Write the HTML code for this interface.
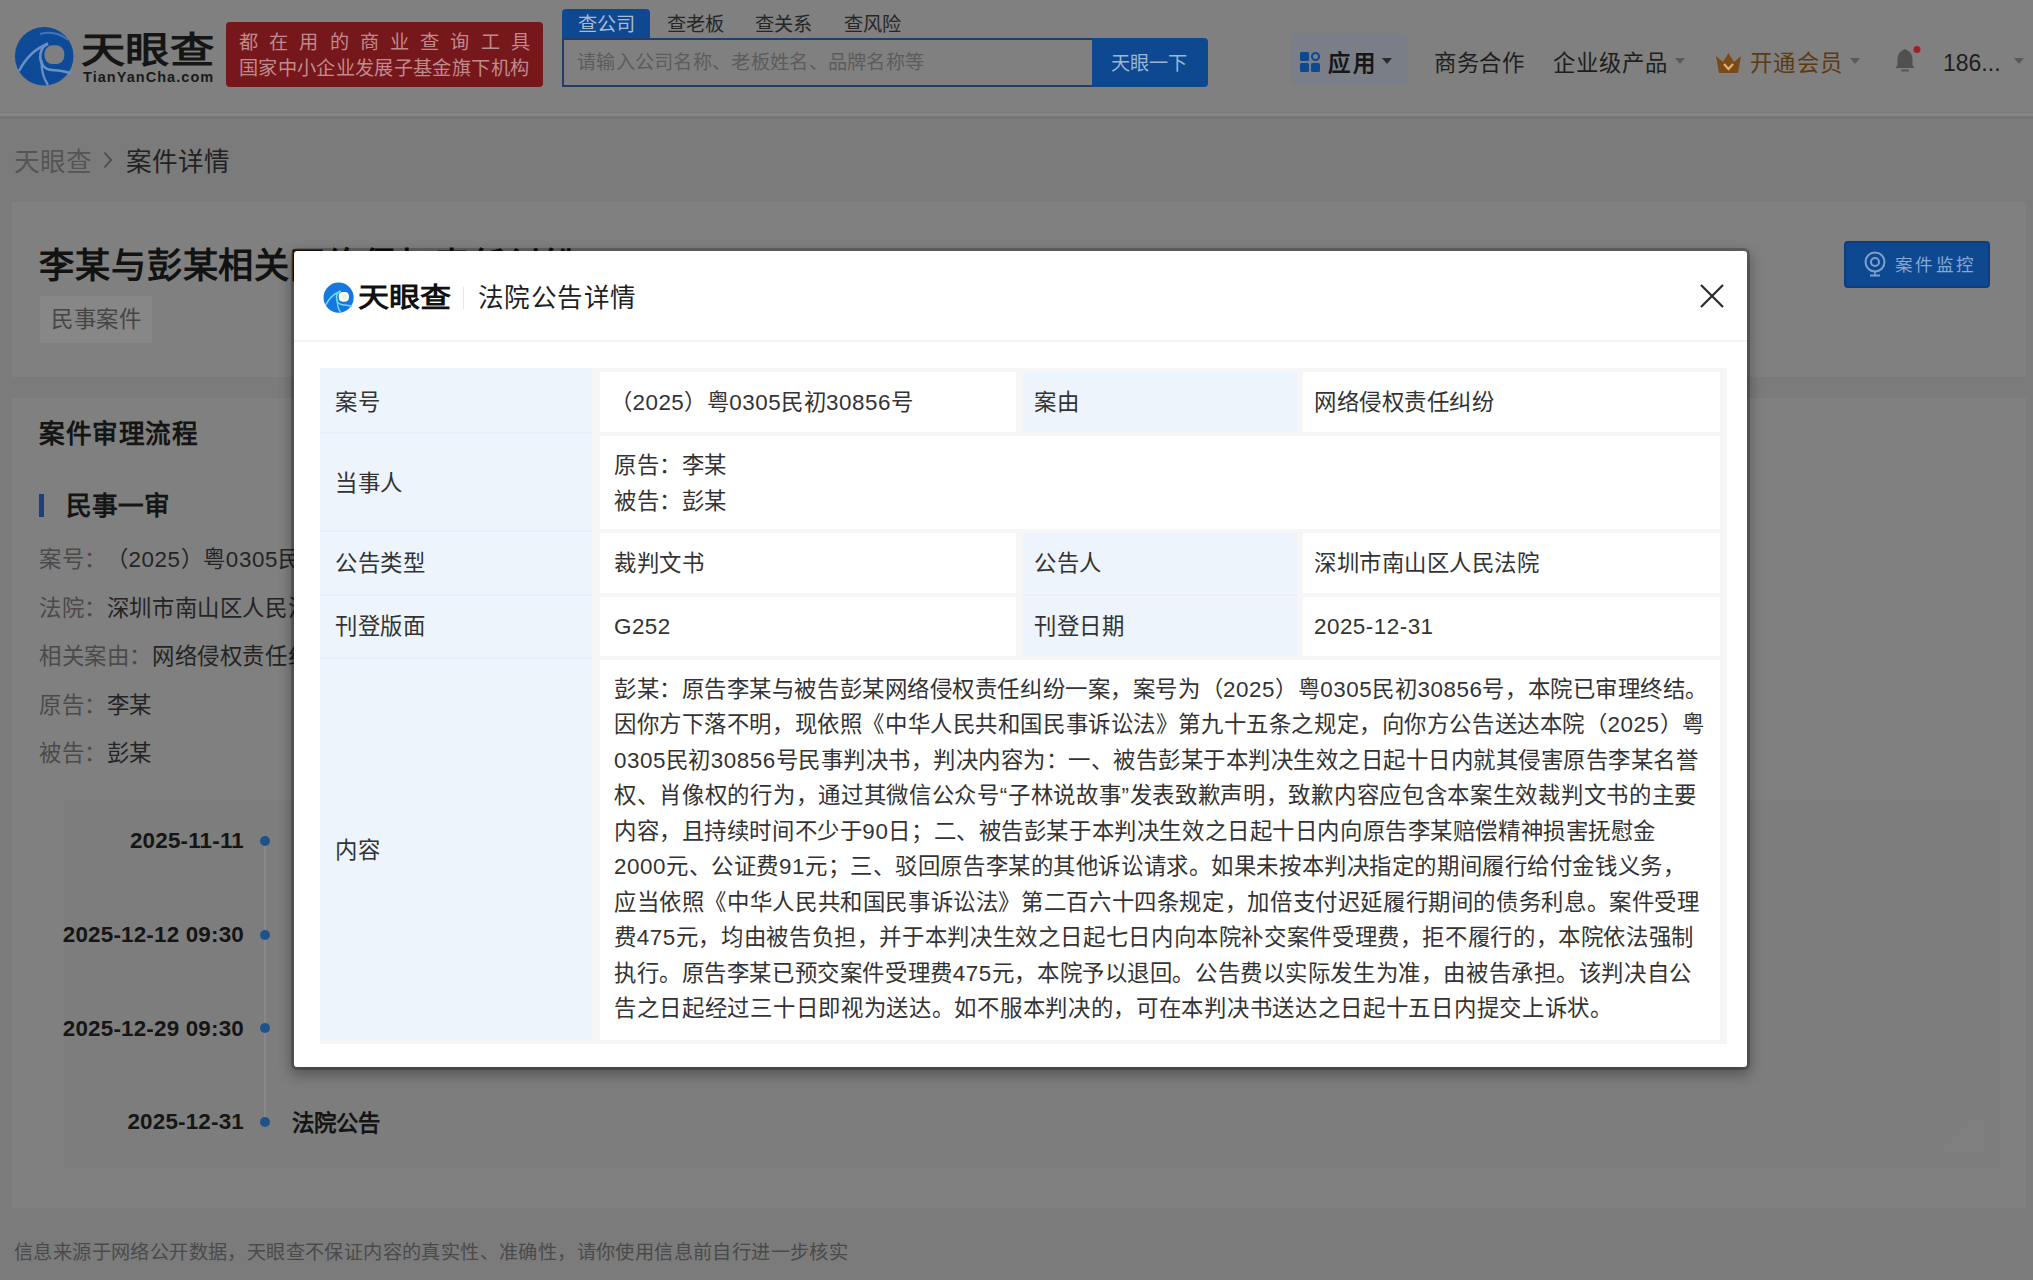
<!DOCTYPE html>
<html lang="zh-CN">
<head>
<meta charset="utf-8">
<style>
*{margin:0;padding:0;box-sizing:border-box}
html,body{width:2033px;height:1280px;overflow:hidden}
body{position:relative;background:#7b7b7b;font-family:"Liberation Sans",sans-serif;color:#1a1a1a}
.a{position:absolute;white-space:nowrap}
#hdr{left:0;top:0;width:2033px;height:112px;background:#808080}
#hdrsh{left:0;top:112px;width:2033px;height:7px;background:linear-gradient(#7b7b7b 0,#7b7b7b 1px,#858585 1px,#858585 3.5px,#747474 5px,#747474 6.5px,#7b7b7b 7px)}
.card{background:#808080}
.caret{width:0;height:0;border-left:5px solid transparent;border-right:5px solid transparent;border-top:6px solid #333}
.t{font-size:22.4px;line-height:30px;color:#333;letter-spacing:0.5px}
.pl{white-space:nowrap}
</style>
</head>
<body>
<!-- HEADER -->
<div class="a" id="hdr"></div>
<div class="a" id="hdrsh"></div>

<!-- logo -->
<svg class="a" style="left:8px;top:20px" width="72" height="72" viewBox="0 0 72 72">
  <circle cx="36.2" cy="36.2" r="29.3" fill="#0f4a98"/>
  <path d="M32 14 Q48 10 60 20" stroke="#4f7fbf" stroke-width="2" fill="none" opacity="0.8"/>
  <rect x="36.5" y="25.3" width="19.8" height="18.8" rx="8" fill="#7f7f7f"/>
  <path d="M40 23.5 C29 28 29 49 44 50 C52 50.5 57 51 63 53.5" stroke="#6892c4" stroke-width="2.6" fill="none"/>
  <path d="M11 51 Q22 30 40 24" stroke="#6892c4" stroke-width="2.4" fill="none"/>
  <path d="M33.5 40 Q33 55 40 65" stroke="#6892c4" stroke-width="2.2" fill="none"/>
</svg>
<div class="a" style="left:81px;top:28px;font-size:36px;font-weight:bold;letter-spacing:0;color:#151515;line-height:46px;transform:scaleX(1.23);transform-origin:0 0">天眼查</div>
<div class="a" style="left:83px;top:69px;font-size:14.5px;font-weight:bold;letter-spacing:1.05px;color:#1a1a1a;line-height:16px">TianYanCha.com</div>

<!-- red banner -->
<div class="a" style="left:226px;top:22px;width:317px;height:65px;background:#76171c;border-radius:4px"></div>
<div class="a" style="left:239px;top:30px;font-size:19.2px;line-height:26px;letter-spacing:11.2px;color:#c08a8c">都在用的商业查询工具</div>
<div class="a" style="left:239px;top:56px;font-size:19.2px;line-height:26px;letter-spacing:0.35px;color:#c08a8c">国家中小企业发展子基金旗下机构</div>

<!-- tabs -->
<div class="a" style="left:562px;top:9px;width:88px;height:30px;background:#0d4891;border-radius:4px 4px 0 0"></div>
<div class="a" style="left:578px;top:12px;font-size:19.2px;line-height:26px;color:#a9bbd3">查公司</div>
<div class="a" style="left:667px;top:12px;font-size:19.2px;line-height:26px;color:#262626">查老板</div>
<div class="a" style="left:755px;top:12px;font-size:19.2px;line-height:26px;color:#262626">查关系</div>
<div class="a" style="left:844px;top:12px;font-size:19.2px;line-height:26px;color:#262626">查风险</div>
<!-- search -->
<div class="a" style="left:562px;top:38px;width:532px;height:49px;border:2px solid #243c68;background:#808080"></div>
<div class="a" style="left:577px;top:50px;font-size:19.2px;line-height:26px;color:#5c5c5c;letter-spacing:0.3px">请输入公司名称、老板姓名、品牌名称等</div>
<div class="a" style="left:1092px;top:38px;width:116px;height:49px;background:#0d4891;border-radius:0 4px 4px 0"></div>
<div class="a" style="left:1111px;top:51px;font-size:19.2px;line-height:26px;color:#9cb6d6">天眼一下</div>

<!-- right nav -->
<div class="a" style="left:1291px;top:33px;width:117px;height:52px;background:#7a7f87;border-radius:3px"></div>
<svg class="a" style="left:1300px;top:52px" width="21" height="21" viewBox="0 0 21 21">
  <rect x="0" y="0" width="9" height="9" rx="1.5" fill="#0d4891"/>
  <rect x="0" y="11" width="9" height="9" rx="1.5" fill="#0d4891"/>
  <rect x="11" y="11" width="9" height="9" rx="1.5" fill="#0d4891"/>
  <circle cx="15.5" cy="4.5" r="3.5" fill="none" stroke="#0d4891" stroke-width="2"/>
</svg>
<div class="a" style="left:1328px;top:49px;font-size:22.4px;line-height:30px;color:#161616;font-weight:bold;letter-spacing:2.5px">应用</div>
<div class="a caret" style="left:1382px;top:58px;border-top-color:#2a2a2a"></div>
<div class="a" style="left:1434px;top:49px;font-size:22.4px;line-height:30px;color:#1e1e1e;letter-spacing:0.6px">商务合作</div>
<div class="a" style="left:1553px;top:49px;font-size:22.4px;line-height:30px;color:#1e1e1e;letter-spacing:1px">企业级产品</div>
<div class="a caret" style="left:1675px;top:58px;border-top-color:#5a5a5a"></div>
<svg class="a" style="left:1715px;top:50px" width="27" height="24" viewBox="0 0 27 24">
  <path d="M1 6 L8 12 L13.5 3 L19 12 L26 6 L23 23 L4 23 Z" fill="#7a4a18"/>
  <path d="M9 14 L13.5 19 L18 14" stroke="#e0b070" stroke-width="2.2" fill="none"/>
</svg>
<div class="a" style="left:1750px;top:49px;font-size:22.4px;line-height:30px;color:#5e3a14;font-weight:500;letter-spacing:1.4px">开通会员</div>
<div class="a caret" style="left:1850px;top:58px;border-top-color:#5a5a5a"></div>
<svg class="a" style="left:1893px;top:46px" width="30" height="28" viewBox="0 0 30 28">
  <path d="M2.5 22 L4.5 19 L4.5 12 Q5 6 12 3 Q19 6 19.5 12 L19.5 19 L21.5 22 Z" fill="#505050"/>
  <rect x="8" y="23.5" width="8" height="2" rx="1" fill="#555"/>
  <circle cx="24" cy="3.5" r="3.5" fill="#a0202a"/>
</svg>
<div class="a" style="left:1943px;top:48px;font-size:23px;line-height:30px;color:#1e1e1e">186...</div>
<div class="a caret" style="left:2014px;top:58px;border-top-color:#5a5a5a"></div>

<!-- breadcrumb -->
<div class="a" style="left:14px;top:145px;font-size:25.6px;line-height:34px;color:#555">天眼查</div>
<svg class="a" style="left:100px;top:148px" width="16" height="24" viewBox="0 0 16 24"><path d="M4.5 4.5 L11 12 L4.5 19.5" stroke="#4a4a4a" stroke-width="1.8" fill="none"/></svg>
<div class="a" style="left:126px;top:145px;font-size:25.6px;line-height:34px;color:#222">案件详情</div>

<!-- card 1 -->
<div class="a card" style="left:12px;top:202px;width:2014px;height:175px"></div>
<div class="a" style="left:39px;top:244px;font-size:35.2px;line-height:44px;font-weight:bold;color:#121212;letter-spacing:0.9px">李某与彭某相关网络侵权责任纠纷</div>
<div class="a" style="left:40px;top:296px;width:112px;height:47px;background:#878787;border-radius:3px"></div>
<div class="a" style="left:51px;top:305px;font-size:22.4px;line-height:30px;color:#454545;letter-spacing:0.5px">民事案件</div>
<div class="a" style="left:1844px;top:241px;width:146px;height:47px;background:#0d4891;border:2px solid #0b3e80;border-radius:4px"></div>
<svg class="a" style="left:1863px;top:251px" width="25" height="27" viewBox="0 0 25 27">
  <circle cx="12" cy="11" r="9.5" fill="none" stroke="#7fa2cc" stroke-width="2"/>
  <circle cx="12" cy="11" r="4" fill="none" stroke="#7fa2cc" stroke-width="2"/>
  <circle cx="12" cy="11" r="1.2" fill="#0a3a78"/>
  <path d="M7 24.5 L17 24.5" stroke="#7fa2cc" stroke-width="2"/>
  <path d="M12 20.5 L12 24" stroke="#7fa2cc" stroke-width="1.5"/>
</svg>
<div class="a" style="left:1895px;top:252px;font-size:17.6px;line-height:26px;color:#86a8cf;letter-spacing:2.4px">案件监控</div>

<!-- card 2 -->
<div class="a card" style="left:12px;top:398px;width:2014px;height:810px"></div>
<div class="a" style="left:39px;top:418px;font-size:25.6px;line-height:32px;font-weight:bold;color:#151515;letter-spacing:0.6px">案件审理流程</div>
<div class="a" style="left:39px;top:494px;width:5px;height:23px;background:#1f3f7c"></div>
<div class="a" style="left:66px;top:490px;font-size:25.6px;line-height:32px;font-weight:bold;color:#151515">民事一审</div>

<div class="a" style="left:39px;top:545px;font-size:22.4px;line-height:30px;color:#4a4a4a;letter-spacing:0.6px">案号：<span style="color:#242424;margin-left:10px">（2025）粤0305民初30856号</span></div>
<div class="a" style="left:39px;top:594px;font-size:22.4px;line-height:30px;color:#4a4a4a;letter-spacing:0.6px">法院：<span style="color:#242424">深圳市南山区人民法院</span></div>
<div class="a" style="left:39px;top:642px;font-size:22.4px;line-height:30px;color:#4a4a4a;letter-spacing:0.6px">相关案由：<span style="color:#242424">网络侵权责任纠纷</span></div>
<div class="a" style="left:39px;top:691px;font-size:22.4px;line-height:30px;color:#4a4a4a;letter-spacing:0.6px">原告：<span style="color:#242424">李某</span></div>
<div class="a" style="left:39px;top:739px;font-size:22.4px;line-height:30px;color:#4a4a4a;letter-spacing:0.6px">被告：<span style="color:#242424">彭某</span></div>

<!-- timeline -->
<div class="a" style="left:64px;top:800px;width:1936px;height:368px;background:#7d7d7d"></div>
<div class="a" style="left:264px;top:841px;width:2px;height:282px;background:#888888"></div>
<div class="a" style="left:44px;top:826px;width:200px;text-align:right;font-size:22.4px;line-height:30px;font-weight:bold;color:#151515;letter-spacing:0.2px">2025-11-11</div>
<div class="a" style="left:44px;top:920px;width:200px;text-align:right;font-size:22.4px;line-height:30px;font-weight:bold;color:#151515;letter-spacing:0.2px">2025-12-12 09:30</div>
<div class="a" style="left:44px;top:1014px;width:200px;text-align:right;font-size:22.4px;line-height:30px;font-weight:bold;color:#151515;letter-spacing:0.2px">2025-12-29 09:30</div>
<div class="a" style="left:44px;top:1107px;width:200px;text-align:right;font-size:22.4px;line-height:30px;font-weight:bold;color:#151515;letter-spacing:0.2px">2025-12-31</div>
<div class="a" style="left:260px;top:836px;width:10px;height:10px;border-radius:50%;background:#1f5288"></div>
<div class="a" style="left:260px;top:930px;width:10px;height:10px;border-radius:50%;background:#1f5288"></div>
<div class="a" style="left:260px;top:1023px;width:10px;height:10px;border-radius:50%;background:#1f5288"></div>
<div class="a" style="left:260px;top:1117px;width:10px;height:10px;border-radius:50%;background:#1f5288"></div>
<div class="a" style="left:292px;top:1109px;font-size:22.4px;line-height:30px;font-weight:bold;color:#151515">法院公告</div>

<svg class="a" style="left:1944px;top:1120px" width="40" height="32" viewBox="0 0 40 32"><path d="M0 32 L0 24 L8 24 L8 16 L16 16 L16 8 L24 8 L24 0 L40 0 L40 32 Z" fill="#808080"/></svg>
<!-- footer -->
<div class="a" style="left:14px;top:1240px;font-size:19.2px;line-height:26px;color:#4a4a4a;letter-spacing:0.4px">信息来源于网络公开数据，天眼查不保证内容的真实性、准确性，请你使用信息前自行进一步核实</div>

<!-- MODAL -->
<div class="a" id="modal" style="left:294px;top:251px;width:1453px;height:816px;background:#fff;border-radius:3px;box-shadow:0 0 0 3px rgba(0,0,0,0.22),0 5px 14px 3px rgba(0,0,0,0.32)"></div>
<svg class="a" style="left:320px;top:279px" width="37" height="37" viewBox="0 0 72 72">
  <circle cx="36.2" cy="36.2" r="29.3" fill="#1478de"/>
  <rect x="36.5" y="25.3" width="19.8" height="18.8" rx="8" fill="#ffffff"/>
  <circle cx="47" cy="34" r="5" fill="#eef3d6"/>
  <path d="M40 23.5 C29 28 29 49 44 50 C52 50.5 57 51 63 53.5" stroke="#74d8ff" stroke-width="3" fill="none"/>
  <path d="M11 51 Q22 30 40 24" stroke="#74d8ff" stroke-width="3" fill="none"/>
  <path d="M33.5 40 Q33 55 40 65" stroke="#74d8ff" stroke-width="2.6" fill="none"/>
</svg>
<div class="a" style="left:358px;top:281px;font-size:27px;line-height:34px;font-weight:bold;color:#111;transform:scaleX(1.15);transform-origin:0 0">天眼查</div>
<div class="a" style="left:463px;top:287px;width:1px;height:22px;background:#e6e6e6"></div>
<div class="a" style="left:478px;top:282px;font-size:25.6px;line-height:32px;color:#1f1f1f;font-weight:500;letter-spacing:0.4px">法院公告详情</div>
<svg class="a" style="left:1699px;top:283px" width="26" height="26" viewBox="0 0 26 26">
  <path d="M2 2 L24 24 M24 2 L2 24" stroke="#2a2a2a" stroke-width="2.2"/>
</svg>
<div class="a" style="left:294px;top:340px;width:1453px;height:2px;background:#f3f3f3"></div>

<!-- table -->
<div class="a" id="tbl" style="left:320px;top:368px;width:1406px;height:673px;background:#fff"></div>
<!-- label bgs -->
<div class="a" style="left:320px;top:368px;width:272px;height:673px;background:#eef4fc"></div>
<div class="a" style="left:1023px;top:368px;width:274px;height:64px;background:#eef4fc"></div>
<div class="a" style="left:1023px;top:531px;width:274px;height:126px;background:#eef4fc"></div>
<!-- borders -->
<div class="a" style="left:592px;top:368px;width:1135px;height:4px;background:#f6f6f6"></div>
<div class="a" style="left:592px;top:432px;width:1135px;height:4px;background:#f6f6f6"></div>
<div class="a" style="left:592px;top:529px;width:1135px;height:4px;background:#f6f6f6"></div>
<div class="a" style="left:592px;top:593px;width:1135px;height:4px;background:#f6f6f6"></div>
<div class="a" style="left:592px;top:656px;width:1135px;height:4px;background:#f6f6f6"></div>
<div class="a" style="left:320px;top:1040px;width:1407px;height:4px;background:#f6f6f6"></div>
<div class="a" style="left:320px;top:432px;width:272px;height:2px;background:#e8eff8"></div>
<div class="a" style="left:320px;top:530px;width:272px;height:2px;background:#e8eff8"></div>
<div class="a" style="left:320px;top:594px;width:272px;height:2px;background:#e8eff8"></div>
<div class="a" style="left:320px;top:657px;width:272px;height:2px;background:#e8eff8"></div>
<div class="a" style="left:1023px;top:594px;width:274px;height:2px;background:#e8eff8"></div>
<div class="a" style="left:592px;top:368px;width:8px;height:676px;background:#f6f6f6"></div>
<div class="a" style="left:1016px;top:368px;width:7px;height:64px;background:#f6f6f6"></div>
<div class="a" style="left:1016px;top:531px;width:7px;height:126px;background:#f6f6f6"></div>
<div class="a" style="left:1297px;top:368px;width:6px;height:64px;background:#f6f6f6"></div>
<div class="a" style="left:1297px;top:531px;width:6px;height:126px;background:#f6f6f6"></div>
<div class="a" style="left:1720px;top:368px;width:7px;height:676px;background:#f6f6f6"></div>

<!-- labels -->
<div class="a t" style="left:335px;top:388px">案号</div>
<div class="a t" style="left:610px;top:388px">（2025）粤0305民初30856号</div>
<div class="a t" style="left:1034px;top:388px">案由</div>
<div class="a t" style="left:1314px;top:388px">网络侵权责任纠纷</div>
<div class="a t" style="left:335px;top:469px">当事人</div>
<div class="a t" style="left:614px;top:451px">原告：李某</div>
<div class="a t" style="left:614px;top:487px">被告：彭某</div>
<div class="a t" style="left:335px;top:549px">公告类型</div>
<div class="a t" style="left:614px;top:549px">裁判文书</div>
<div class="a t" style="left:1034px;top:549px">公告人</div>
<div class="a t" style="left:1314px;top:549px">深圳市南山区人民法院</div>
<div class="a t" style="left:335px;top:612px">刊登版面</div>
<div class="a t" style="left:614px;top:612px">G252</div>
<div class="a t" style="left:1034px;top:612px">刊登日期</div>
<div class="a t" style="left:1314px;top:612px">2025-12-31</div>
<div class="a t" style="left:335px;top:836px">内容</div>
<div class="a" id="para" style="left:614px;top:672px;font-size:22.4px;line-height:35.44px;color:#333">
<div class="pl" style="letter-spacing:0.558px">彭某：原告李某与被告彭某网络侵权责任纠纷一案，案号为（2025）粤0305民初30856号，本院已审理终结。</div>
<div class="pl" style="letter-spacing:0.580px">因你方下落不明，现依照《中华人民共和国民事诉讼法》第九十五条之规定，向你方公告送达本院（2025）粤</div>
<div class="pl" style="letter-spacing:0.506px">0305民初30856号民事判决书，判决内容为：一、被告彭某于本判决生效之日起十日内就其侵害原告李某名誉</div>
<div class="pl" style="letter-spacing:0.696px">权、肖像权的行为，通过其微信公众号“子林说故事”发表致歉声明，致歉内容应包含本案生效裁判文书的主要</div>
<div class="pl" style="letter-spacing:0.578px">内容，且持续时间不少于90日；二、被告彭某于本判决生效之日起十日内向原告李某赔偿精神损害抚慰金</div>
<div class="pl" style="letter-spacing:0.571px">2000元、公证费91元；三、驳回原告李某的其他诉讼请求。如果未按本判决指定的期间履行给付金钱义务，</div>
<div class="pl" style="letter-spacing:0.617px">应当依照《中华人民共和国民事诉讼法》第二百六十四条规定，加倍支付迟延履行期间的债务利息。案件受理</div>
<div class="pl" style="letter-spacing:0.625px">费475元，均由被告负担，并于本判决生效之日起七日内向本院补交案件受理费，拒不履行的，本院依法强制</div>
<div class="pl" style="letter-spacing:0.579px">执行。原告李某已预交案件受理费475元，本院予以退回。公告费以实际发生为准，由被告承担。该判决自公</div>
<div class="pl" style="letter-spacing:0.698px">告之日起经过三十日即视为送达。如不服本判决的，可在本判决书送达之日起十五日内提交上诉状。</div>
</div>
</body>
</html>
